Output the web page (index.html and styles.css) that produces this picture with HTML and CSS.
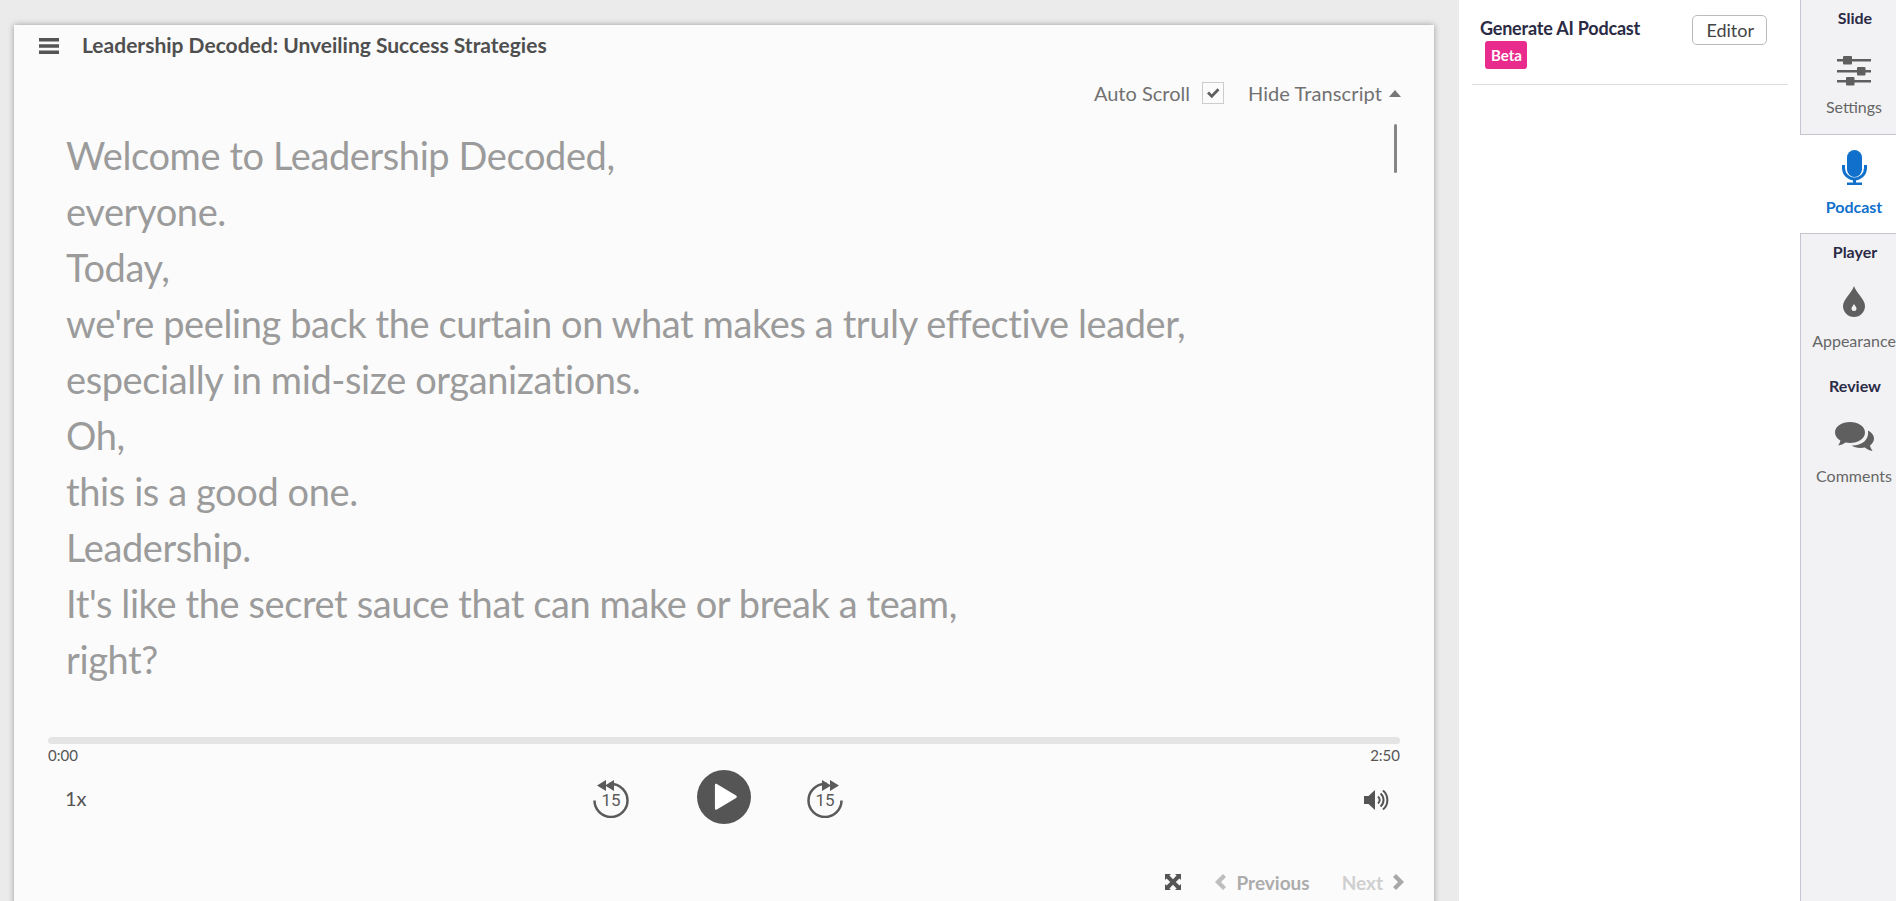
FILE: index.html

```html
<!DOCTYPE html>
<html lang="en">
<head>
  <meta charset="UTF-8" />
  <title>Leadership Decoded</title>
  <link rel="stylesheet" href="styles.css">
</head>
<body>

  <!-- Player -->
  <main class="stage">
    <section class="card">
      <header class="card-head">
        <svg class="menu-icon" viewBox="0 0 20 16"><path d="M0 0h20v3.400H0zM0 6.300h20v3.400H0zM0 12.600h20V16H0z"/></svg>
        <h1>Leadership Decoded: Unveiling Success Strategies</h1>
      </header>

      <div class="transcript-bar">
        <span class="auto-label">Auto Scroll</span>
        <span class="checkbox">
          <svg viewBox="0 0 14 12"><path d="M1 6.500l2-2 2.800 2.800L11.500 1.200l2 2-7.700 8.100z"/></svg>
        </span>
        <span class="hide-label">Hide Transcript</span>
        <span class="caret"></span>
      </div>

      <div class="transcript">
        <p>Welcome to Leadership Decoded,</p>
        <p>everyone.</p>
        <p>Today,</p>
        <p>we're peeling back the curtain on what makes a truly effective leader,</p>
        <p>especially in mid-size organizations.</p>
        <p>Oh,</p>
        <p>this is a good one.</p>
        <p>Leadership.</p>
        <p>It's like the secret sauce that can make or break a team,</p>
        <p>right?</p>
        <div class="scroll-thumb"></div>
      </div>

      <div class="progress"></div>
      <div class="times"><span>0:00</span><span>2:50</span></div>

      <div class="controls">
        <span class="speed">1x</span>
        <div class="transport">
          <span class="skip">
            <svg viewBox="0 0 36 38"><path class="ring" d="M1.500 20.500a16.500 16.500 0 1 0 16.500-16.500h-2"/><path d="M21 0v11l-9-5.500zM13 0v11L4 5.500z"/></svg>
            <span class="skip-num">15</span>
          </span>
          <span class="play play-gap">
            <svg viewBox="0 0 26 28"><path d="M2 1.500c0-1 1-1.500 2-1l20 12c1 .6 1 2 0 2.600l-20 12c-1 .5-2 0-2-1z"/></svg>
          </span>
          <span class="skip">
            <svg viewBox="0 0 36 38"><path class="ring" d="M34.500 20.500a16.500 16.500 0 1 1-16.500-16.500h2"/><path d="M15 0v11l9-5.500zM23 0v11l9-5.500z"/></svg>
            <span class="skip-num">15</span>
          </span>
        </div>
        <svg class="volume" viewBox="0 0 26 22"><path d="M0 7h4.500L11 1v20l-6.500-6H0z"/><path class="wave" d="M14 7.500a4.500 4.500 0 0 1 0 7M16.500 4.500a8.500 8.500 0 0 1 0 13M19 1.500a12.500 12.500 0 0 1 0 19"/></svg>
      </div>

      <div class="pager">
        <svg class="expand" viewBox="0 0 16 16"><path d="M0 0h6L4.400 1.600 8 5.200l3.600-3.600L10 0h6v6l-1.600-1.600L10.800 8l3.600 3.600L16 10v6h-6l1.600-1.600L8 10.800l-3.600 3.600L6 16H0v-6l1.600 1.600L5.200 8 1.600 4.400 0 6z"/></svg>
        <svg class="chev" viewBox="0 0 11 16"><path d="M8 0l3 3-5 5 5 5-3 3-8-8z"/></svg>
        <span class="pager-prev">Previous</span>
        <span class="pager-next">Next</span>
        <svg class="chev chev-next" viewBox="0 0 11 16"><path d="M3 0l8 8-8 8-3-3 5-5-5-5z"/></svg>
      </div>
    </section>
  </main>

  <!-- Podcast panel -->
  <aside class="panel">
    <div class="panel-head">
      <div>
        <div class="panel-title">Generate AI Podcast</div>
        <span class="beta">Beta</span>
      </div>
      <button class="editor-btn">Editor</button>
    </div>
  </aside>

  <!-- Right tabs -->
  <nav class="tabs">
    <div class="tab-group tab-slide">
      <div class="group-name">Slide</div>
      <div class="tab">
        <svg class="tab-icon sliders" viewBox="0 0 34 30"><path d="M0 3h34v2.500H0zM0 14h34v2.500H0zM0 24h34v2.500H0z"/><rect x="6" y="0" width="9" height="8.500" rx="1"/><rect x="20" y="11" width="8.500" height="8.500" rx="1"/><rect x="9" y="21" width="8.500" height="8.500" rx="1"/></svg>
        <span>Settings</span>
      </div>
    </div>
    <div class="tab tab-active">
      <svg class="tab-icon mic" viewBox="0 0 25 35"><rect x="5" y="0" width="15" height="27" rx="7.500"/><path class="mic-arc" d="M1.500 15v3a11 11 0 0 0 22 0v-3"/><path d="M11 28h3v5h-3zM5 32.500h15V35H5z"/></svg>
      <span>Podcast</span>
    </div>
    <div class="tab-group tab-player">
      <div class="group-name">Player</div>
      <div class="tab">
        <svg class="tab-icon drop" viewBox="0 0 22 31"><path fill-rule="evenodd" d="M11 0c2 7 11 13 11 20a11 11 0 0 1-22 0C0 13 9 7 11 0zm0 18c-1 2-2.500 3-2.500 4.500a2.500 2.500 0 0 0 5 0C13.500 21 12 20 11 18z"/></svg>
        <span>Appearance</span>
      </div>
      <div class="group-name group-review">Review</div>
      <div class="tab">
        <svg class="tab-icon comments" viewBox="0 0 39 31"><path d="M15 0c8.300 0 15 4.600 15 10.500S23.300 21 15 21c-1.600 0-3-.2-4.500-.5C8.500 22 6 23 3 23.500c1.200-1.300 2-3 2.400-5C2 16.600 0 13.700 0 10.500 0 4.600 6.700 0 15 0z"/><path d="M33 8.500c3.500 1.800 6 4.700 6 8 0 2.800-1.500 5.200-4 7 .4 2 1.300 3.500 2.500 5.500-3-.5-5.500-1.700-7.500-3.500-1.400.3-2.900.4-4.500.4-3.500 0-6.800-1-9-2.500 9 .5 18-4.500 16.500-14.900z"/></svg>
        <span>Comments</span>
      </div>
    </div>
  </nav>

</body>
</html>
```

FILE: styles.css

```css
* {
  box-sizing: border-box;
}
body {
  margin: 0;
  display: flex;
  height: 901px;
  overflow: hidden;
  font-family: Lato, 'Open Sans', sans-serif;
  background-color: #fff;
  color: #555;
}
svg {
  display: block;
  fill: currentColor;
}

/* stage */
.stage {
  width: 1459px;
  flex: none;
  background-color: #ebebeb;
  padding: 25px 25px 0 14px;
}
.card {
  height: 900px;
  background-color: #fbfbfb;
  box-shadow: 0 0 6px rgba(0, 0, 0, 0.35);
  padding: 0 34px;
}
.card-head {
  display: flex;
  align-items: center;
  height: 42px;
}
.menu-icon {
  width: 20px;
  height: 16px;
  margin-left: -9px;
  color: #555;
}
.card-head h1 {
  margin: -4px 0 0 23px;
  font-size: 21px;
  font-weight: 700;
  color: #4f4f4f;
}
.transcript-bar {
  display: flex;
  align-items: center;
  justify-content: flex-end;
  height: 24px;
  margin-top: 14px;
  margin-right: -1px;
  color: #717171;
  font-size: 20px;
}
.auto-label {
  margin-top: -1px;
}
.checkbox {
  width: 22px;
  height: 22px;
  margin: 0 24px 0 12px;
  padding: 4px 3px;
  border: 1px solid #ccc;
  color: #5f5f5f;
}
.hide-label {
  letter-spacing: 0.1px;
}
.caret {
  width: 0;
  height: 0;
  margin-left: 7px;
  border-left: 6px solid transparent;
  border-right: 6px solid transparent;
  border-bottom: 7px solid #777;
}
.transcript {
  position: relative;
  height: 613px;
  margin-top: 19px;
  padding: 3px 0 0 18px;
  color: #9b9b9b;
  font-size: 38px;
  letter-spacing: -0.4px;
  line-height: 56px;
}
.transcript p {
  margin: 0;
  white-space: nowrap;
}
.scroll-thumb {
  position: absolute;
  top: 0;
  right: 3px;
  width: 3px;
  height: 49px;
  border-radius: 2px;
  background-color: #858585;
}
.progress {
  height: 7px;
  border-radius: 4px;
  background-color: #e4e4e4;
}
.times {
  display: flex;
  justify-content: space-between;
  margin-top: 2px;
  font-size: 15px;
  line-height: 18px;
  color: #555;
}
.controls {
  display: flex;
  align-items: center;
  height: 66px;
}
.speed {
  width: 72px;
  margin-top: 2px;
  padding-left: 17px;
  font-size: 20px;
}
.transport {
  display: flex;
  align-items: center;
  margin-left: 473px;
}
.skip {
  position: relative;
  width: 36px;
  height: 38px;
  margin-top: 3px;
  color: #5a5a5a;
}
.ring {
  fill: none;
  stroke: currentColor;
  stroke-width: 2.500;
}
.skip-num {
  position: absolute;
  left: 0;
  right: 0;
  top: 10px;
  text-align: center;
  font-family: Roboto, sans-serif;
  font-size: 17px;
  line-height: 20px;
}
.play {
  display: flex;
  align-items: center;
  justify-content: center;
  width: 54px;
  height: 54px;
  border-radius: 50%;
  background-color: #555;
  color: #fff;
}
.play-gap {
  margin: 0 56px 0 68px;
}
.play svg {
  width: 25px;
  height: 28px;
  margin-left: 3px;
}
.volume {
  width: 26px;
  height: 22px;
  margin: 5px 10px 0 auto;
}
.wave {
  fill: none;
  stroke: currentColor;
  stroke-width: 2;
}
.pager {
  display: flex;
  align-items: center;
  justify-content: flex-end;
  height: 24px;
  margin-top: 40px;
  margin-right: -4px;
  font-size: 19px;
  font-weight: 700;
}
.expand {
  width: 16px;
  height: 16px;
  margin-right: 34px;
  color: #555;
}
.chev {
  width: 11px;
  height: 16px;
  color: #bdbdbd;
}
.pager-prev {
  margin-left: 10px;
  color: #acacac;
}
.pager-next {
  margin-left: 32px;
  color: #cfcfcf;
}
.chev-next {
  margin-left: 10px;
  color: #a8a8a8;
}

/* podcast panel */
.panel {
  width: 341px;
  flex: none;
  padding: 0 12px 0 13px;
}
.panel-head {
  display: flex;
  justify-content: space-between;
  align-items: flex-start;
  height: 85px;
  padding: 15px 21px 0 8px;
  border-bottom: 1px solid #dedede;
}
.panel-title {
  margin-top: 1px;
  margin-bottom: -1px;
  font-size: 18px;
  font-weight: 700;
  line-height: 24px;
  letter-spacing: -0.2px;
  color: #2b2b45;
}
.beta {
  display: inline-block;
  margin: 2px 0 0 5px;
  padding: 0 5px 0 6px;
  border-radius: 3px;
  background-color: #e92b8e;
  color: #fff;
  font-size: 15px;
  font-weight: 700;
  line-height: 28px;
}
.editor-btn {
  height: 30px;
  padding: 0 12px 0 13px;
  border: 1px solid #bbb;
  border-radius: 5px;
  background-color: #fff;
  color: #444;
  font-family: inherit;
  font-size: 18px;
}

/* side tabs */
.tabs {
  width: 96px;
  flex: none;
  display: flex;
  flex-direction: column;
  text-align: center;
  font-size: 16px;
  line-height: 20px;
}
.tab-group {
  padding-left: 11px;
  background-color: #f2f2f5;
  border-left: 1px solid #c5c5cf;
}
.tab-slide {
  height: 135px;
  border-bottom: 1px solid #c5c5cf;
}
.tab-player {
  flex: 1;
  border-top: 1px solid #c5c5cf;
}
.group-name {
  padding-top: 8px;
  padding-left: 2px;
  font-size: 16px;
  font-weight: 700;
  color: #2b2b45;
}
.tab-player .group-review {
  padding-top: 25px;
}
.tab {
  display: flex;
  flex-direction: column;
  align-items: center;
  color: #666;
  white-space: nowrap;
}
.tab-icon {
  color: #5f5f5f;
}
.sliders {
  width: 34px;
  height: 30px;
  margin: 28px 0 11px;
}
.tab-active {
  height: 98px;
  padding: 15px 0 0 12px;
  color: #1070cc;
  font-weight: 700;
}
.tab-active .tab-icon {
  color: #1070cc;
}
.mic {
  width: 25px;
  height: 35px;
  margin-bottom: 12px;
}
.mic-arc {
  fill: none;
  stroke: currentColor;
  stroke-width: 3;
}
.drop {
  width: 22px;
  height: 31px;
  margin: 24px 0 14px;
}
.comments {
  width: 39px;
  height: 31px;
  margin: 26px 0 13px;
}
```
